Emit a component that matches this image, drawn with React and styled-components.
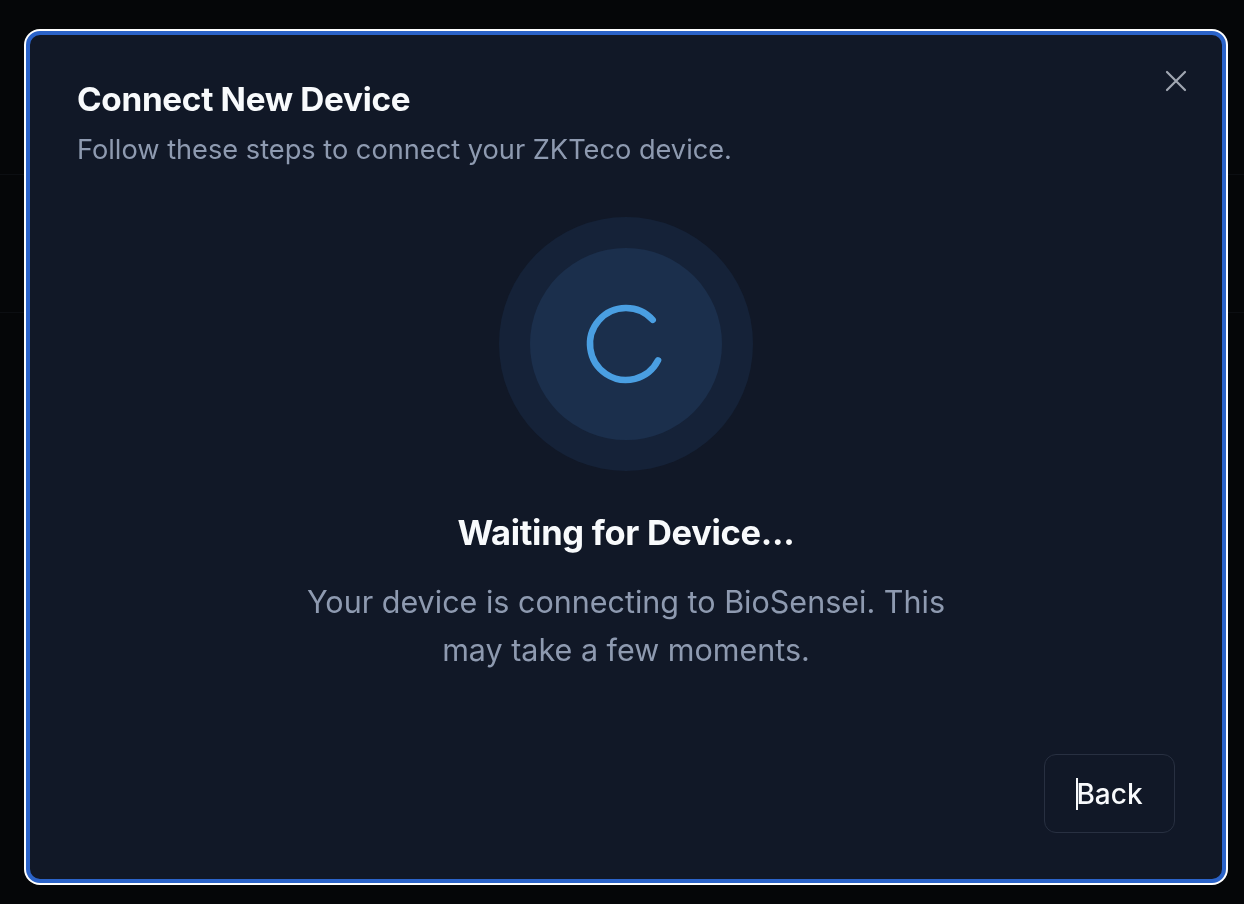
import React from 'react';
import styled, { createGlobalStyle } from 'styled-components';

const GlobalStyle = createGlobalStyle`
  html, body {
    margin: 0;
    padding: 0;
    background-color: #050608;
    font-family: Inter, "Noto Sans", "Liberation Sans", sans-serif;
    -webkit-font-smoothing: antialiased;
  }
  #root {
    min-height: 100vh;
  }
`;

const Page = styled.div`
  height: 100vh;
  overflow: hidden;
`;

const BackdropBand = styled.div`
  height: ${props => props.height}px;
  border-bottom: 1px solid #0c0e12;
`;

const Overlay = styled.div`
  position: fixed;
  inset: 0;
  padding: 31px 18px 21px 26px;
  box-sizing: border-box;
`;

const Dialog = styled.div`
  position: relative;
  box-sizing: border-box;
  width: 1200px;
  height: 852px;
  display: flex;
  flex-direction: column;
  padding: 44px 47px 46px 47px;
  background-color: #111827;
  border: 4px solid #2b63c9;
  border-radius: 14px;
  box-shadow: 0 0 0 2px #ffffff;
`;

const CloseButton = styled.button`
  position: absolute;
  top: 35px;
  right: 35px;
  width: 22px;
  height: 22px;
  padding: 0;
  border: none;
  background: transparent;
  color: #a1a7b2;
  cursor: pointer;
  display: flex;
`;

const Title = styled.h2`
  margin: 0;
  font-size: 33.3px;
  line-height: 40px;
  font-weight: 700;
  letter-spacing: -0.3px;
  color: #f8fafc;
`;

const Subtitle = styled.p`
  margin: 13px 0 0;
  font-size: 27.2px;
  line-height: 36px;
  font-weight: 400;
  color: #8e9ab0;
`;

const Body = styled.div`
  flex: 1;
  display: flex;
  flex-direction: column;
  align-items: center;
  padding-top: 49px;
`;

const OuterRing = styled.div`
  width: 254px;
  height: 254px;
  border-radius: 50%;
  background-color: #152238;
  display: flex;
  align-items: center;
  justify-content: center;
`;

const InnerRing = styled.div`
  width: 192px;
  height: 192px;
  border-radius: 50%;
  background-color: #1b2f4c;
  display: flex;
  align-items: center;
  justify-content: center;
`;

const StatusTitle = styled.h3`
  margin: 41px 0 0;
  font-size: 34.5px;
  line-height: 42px;
  font-weight: 700;
  letter-spacing: -0.3px;
  color: #f8fafc;
  text-align: center;
`;

const StatusText = styled.p`
  margin: 24px 0 0;
  max-width: 680px;
  font-size: 30.5px;
  line-height: 48px;
  color: #8e9ab0;
  text-align: center;
`;

const Footer = styled.div`
  display: flex;
  justify-content: flex-end;
`;

const Button = styled.button`
  box-sizing: border-box;
  width: 131px;
  height: 79px;
  display: flex;
  align-items: center;
  justify-content: center;
  background-color: #111827;
  border: 1.5px solid #283041;
  border-radius: 12px;
  color: #f8fafc;
  font-family: inherit;
  font-size: 28px;
  font-weight: 500;
  cursor: pointer;
`;

const Caret = styled.span`
  display: inline-block;
  width: 1.5px;
  height: 32px;
  margin-right: -1.5px;
  background-color: #f8fafc;
`;

const Spinner = () => {
  const r = 36;
  const c = 45;
  const a1 = (27 * Math.PI) / 180;
  const a2 = (-42 * Math.PI) / 180;
  const x1 = c + r * Math.cos(a1);
  const y1 = c + r * Math.sin(a1);
  const x2 = c + r * Math.cos(a2);
  const y2 = c + r * Math.sin(a2);
  return (
    <svg width="90" height="90" viewBox="0 0 90 90" fill="none">
      <path
        d={`M${x1} ${y1} A${r} ${r} 0 1 1 ${x2} ${y2}`}
        stroke="#4a9fe2"
        strokeWidth="6.5"
        strokeLinecap="round"
      />
    </svg>
  );
};

export default function App() {
  return (
    <Page>
      <GlobalStyle />
      <BackdropBand height={174} />
      <BackdropBand height={137} />
      <Overlay>
        <Dialog>
          <CloseButton aria-label="Close">
            <svg width="22" height="22" viewBox="0 0 22 22" fill="none">
              <path d="M2 2L20 20M20 2L2 20" stroke="currentColor" strokeWidth="2.2" strokeLinecap="round" />
            </svg>
          </CloseButton>
          <Title>Connect New Device</Title>
          <Subtitle>Follow these steps to connect your ZKTeco device.</Subtitle>
          <Body>
            <OuterRing>
              <InnerRing>
                <Spinner />
              </InnerRing>
            </OuterRing>
            <StatusTitle>Waiting for Device...</StatusTitle>
            <StatusText>
              Your device is connecting to BioSensei. This may take a few moments.
            </StatusText>
          </Body>
          <Footer>
            <Button><Caret />Back</Button>
          </Footer>
        </Dialog>
      </Overlay>
    </Page>
  );
}
